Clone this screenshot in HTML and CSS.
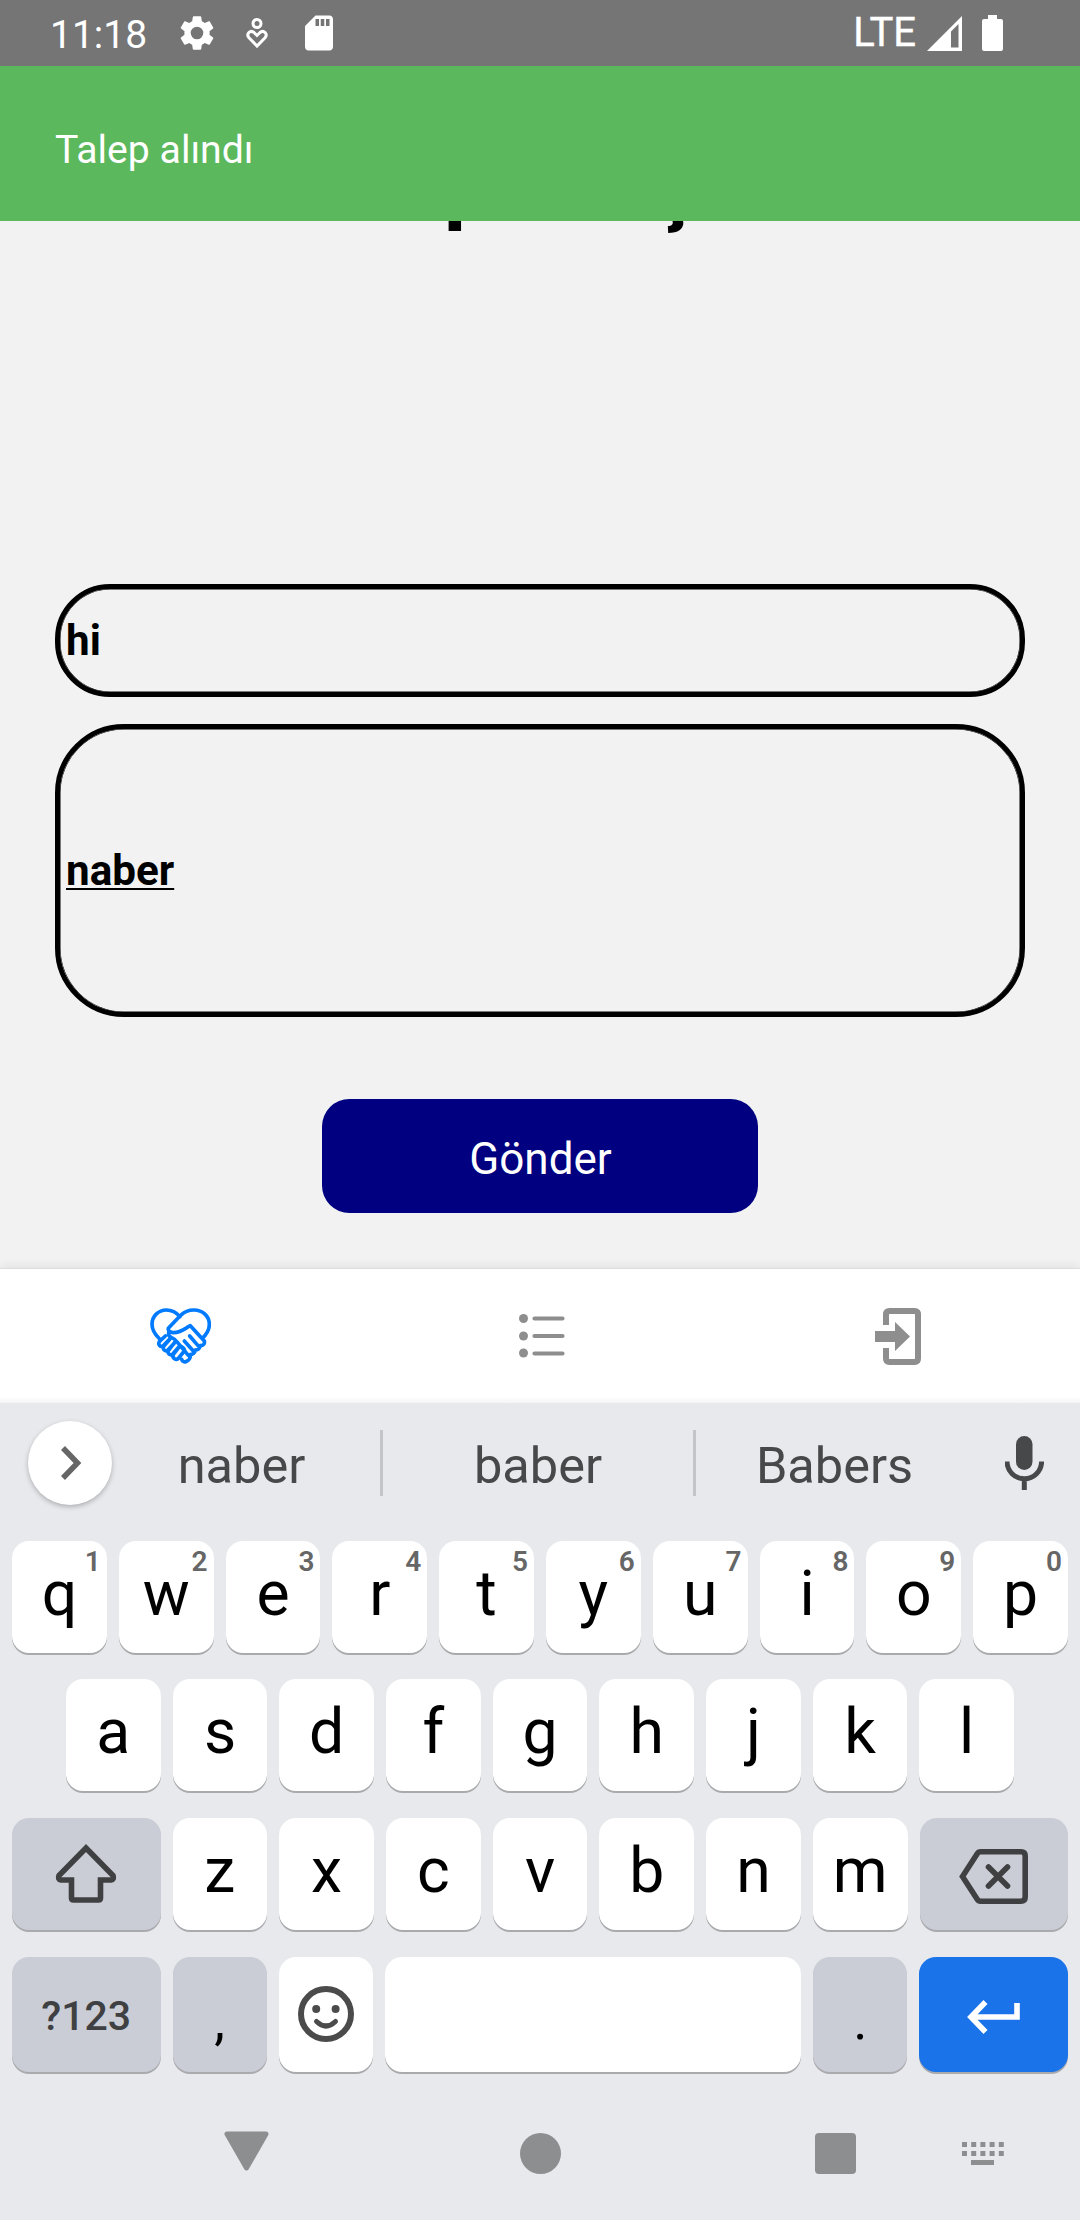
FILE: index.html
```html
<!DOCTYPE html>
<html lang="tr">
<head>
<meta charset="utf-8">
<title>Talep Oluştur</title>
<link rel="stylesheet" href="styles.css">
</head>
<body>
<div class="screen">
  <header class="status">
    <span class="clock">11:18</span>
    <svg class="gear" width="42" height="42" viewBox="0 0 24 24"><path fill="#fff" d="M19.14 12.94c.04-.3.06-.61.06-.94 0-.32-.02-.64-.07-.94l2.03-1.58c.18-.14.23-.41.12-.61l-1.92-3.32c-.12-.22-.37-.29-.59-.22l-2.39.96c-.5-.38-1.03-.7-1.62-.94L14.4 2.81c-.04-.24-.24-.41-.48-.41h-3.84c-.24 0-.43.17-.47.41l-.36 2.54c-.59.24-1.13.57-1.62.94l-2.39-.96c-.22-.08-.47 0-.59.22L2.74 8.87c-.12.21-.08.47.12.61l2.03 1.58c-.05.3-.09.63-.09.94s.02.64.07.94l-2.03 1.58c-.18.14-.23.41-.12.61l1.92 3.32c.12.22.37.29.59.22l2.39-.96c.5.38 1.03.7 1.62.94l.36 2.54c.05.24.24.41.48.41h3.84c.24 0 .44-.17.47-.41l.36-2.54c.59-.24 1.13-.56 1.62-.94l2.39.96c.22.08.47 0 .59-.22l1.92-3.32c.12-.22.07-.47-.12-.61l-2.01-1.58zM12 15.6A3.6 3.6 0 1 1 12 8.400a3.6 3.6 0 0 1 0 7.200z"/></svg>
    <svg class="care" width="22" height="31" viewBox="0 0 22 31" fill="none" stroke="#fff" stroke-width="3"><circle cx="11" cy="5.500" r="4"/><path d="M11 28 3.200 20C-.5 15.800 4.500 11.500 8 14.500l3 3 3-3c3.500-3 8.500 1.300 4.800 5.500z"/></svg>
    <svg class="sd" width="42" height="42" viewBox="0 0 24 24"><path fill="#fff" d="M18 2h-8L4.020 8 4 20c0 1.100.9 2 2 2h12c1.100 0 2-.9 2-2V4c0-1.100-.9-2-2-2zm-6 6h-2V4h2v4zm3 0h-2V4h2v4zm3 0h-2V4h2v4z"/></svg>
    <span class="network">LTE</span>
    <svg class="signal" width="35" height="35" viewBox="0 0 35 35"><path fill="#fff" fill-rule="evenodd" d="M35 0V35H0zM24 15.500V31.500h7.500V8z"/></svg>
    <svg class="battery" width="21" height="36" viewBox="0 0 21 36"><path fill="#fff" d="M6 0h9v4h4q2 0 2 2v28q0 2-2 2H2q-2 0-2-2V6q0-2 2-2h4z"/></svg>
  </header>

  <div class="toast">Talep alındı</div>

  <main class="form">
    <h1 class="title">Talep Oluştur</h1>
    <div class="field subject">hi</div>
    <div class="field message"><u>naber</u></div>
    <button class="send">Gönder</button>
  </main>

  <nav class="tabs">
    <svg class="tab-care" width="61" height="56" viewBox="0 0 183 168" fill="none" stroke="#007aff" stroke-width="11" stroke-linecap="round" stroke-linejoin="round">
      <path d="M29 93C15 80 6 68 6 49 6 25 25 6 49 6c16 0 29 6 41 20"/>
      <path d="M157 91c14-13 21-26 21-42 0-24-20-43-46-43-17 0-29 5-40 16L55 61c-2 7 5 12 15 13 20 1 32-11 51-21l42 46c2 8-3 14-12 14"/>
      <path d="M56 74c-2 8 2 12 9 15 10 4 12 8 18 15l32 38"/>
      <path d="M119 84l25 29M103 99l27 30"/>
      <path d="M150 113c1 8-6 13-15 13 1 9-7 14-15 14 3 9-3 17-12 21-6 2-11-1-13-7"/>
      <path d="M46 84 28 101c-5 9 3 17 11 13l20-21M60 93 41 115c-4 9 4 16 12 12l21-23M74 103 55 128c-3 9 5 15 12 11l20-23M88 116 69 141c-2 10 9 17 16 10l18-22c2-8-8-15-15-13"/>
    </svg>
    <svg class="tab-list" width="46" height="46" viewBox="0 0 46 46" fill="#8e8e8f"><circle cx="4.500" cy="5.500" r="4.500"/><circle cx="4.500" cy="23" r="4.500"/><circle cx="4.500" cy="40" r="4.500"/><path d="M15.500 5.500h28M15.500 23h28M15.500 40.500h28" stroke="#8e8e8f" stroke-width="4.200" stroke-linecap="round"/></svg>
    <svg class="tab-exit" width="46" height="57" viewBox="0 0 46 57"><path d="M11 17V6.500Q11 3 14.500 3h25Q43 3 43 6.500v44Q43 54 39.500 54h-25Q11 54 11 50.500V40" fill="none" stroke="#8e8e8f" stroke-width="6"/><path fill="#8e8e8f" d="M0 23h20v-9l15 14.500L20 43v-9H0z"/></svg>
  </nav>

  <section class="keyboard">
    <div class="suggest">
      <span class="expand"><svg width="21" height="34" viewBox="0 0 21 34"><path d="M2 2l14.500 15L2 32" fill="none" stroke="#666" stroke-width="5.500"/></svg></span>
      <span class="word first">naber</span>
      <span class="word middle">baber</span>
      <span class="word">Babers</span>
      <svg class="mic" width="39" height="54" viewBox="0 0 39 54"><rect x="11" y="0" width="16.500" height="34" rx="8.250" fill="#47484a"/><path d="M2 25.500a17.300 17.300 0 0 0 34.600 0M19.300 43v11" fill="none" stroke="#47484a" stroke-width="5"/></svg>
    </div>
    <div class="keys">
      <div class="row">
        <span class="key">q<sup>1</sup></span><span class="key">w<sup>2</sup></span><span class="key">e<sup>3</sup></span><span class="key">r<sup>4</sup></span><span class="key">t<sup>5</sup></span><span class="key">y<sup>6</sup></span><span class="key">u<sup>7</sup></span><span class="key">i<sup>8</sup></span><span class="key">o<sup>9</sup></span><span class="key">p<sup>0</sup></span>
      </div>
      <div class="row inset">
        <span class="key">a</span><span class="key">s</span><span class="key">d</span><span class="key">f</span><span class="key">g</span><span class="key">h</span><span class="key">j</span><span class="key">k</span><span class="key">l</span>
      </div>
      <div class="row">
        <span class="key wide shade"><svg class="shift" width="62" height="59" viewBox="0 0 62 59"><path d="M31 4 58 31.500q1.500 4-2 4.500H45.500v18q0 2-2 2h-25q-2 0-2-2V36H6q-3.500-.5-2-4.500z" fill="none" stroke="#3f4042" stroke-width="5.600"/></svg></span>
        <span class="key">z</span><span class="key">x</span><span class="key">c</span><span class="key">v</span><span class="key">b</span><span class="key">n</span><span class="key">m</span>
        <span class="key wide shade"><svg class="erase" width="69" height="55" viewBox="0 0 69 55" fill="none" stroke="#3f4042" stroke-width="5.600"><path d="M3.500 27.500 18.200 4.800q1.300-2 3.300-2H62q4.200 0 4.200 4.200v41q0 4.200-4.200 4.200H21.500q-2 0-3.300-2z"/><path d="M29.500 18 48.500 37M48.500 18 29.500 37" stroke-linecap="round"/></svg></span>
      </div>
      <div class="row bottom">
        <span class="key wide shade mode">?123</span>
        <span class="key shade mark">,</span>
        <span class="key"><svg class="smile" width="56" height="56" viewBox="0 0 56 56"><circle cx="28" cy="28" r="25" fill="none" stroke="#4b4b4b" stroke-width="6"/><circle cx="18.200" cy="23" r="4" fill="#4b4b4b"/><circle cx="37.600" cy="23" r="4" fill="#4b4b4b"/><path d="M18.500 35.500q9.500 9 19 0" fill="none" stroke="#4b4b4b" stroke-width="5" stroke-linecap="round"/></svg></span>
        <span class="key space"></span>
        <span class="key shade mark">.</span>
        <span class="key wide enter"><svg width="53" height="34" viewBox="0 0 53 34"><path d="M18.500 2 4 17l14.500 15M4 17h46V3" fill="none" stroke="#fff" stroke-width="5.600"/></svg></span>
      </div>
    </div>
    <div class="system">
      <svg class="back" width="45" height="40" viewBox="0 0 45 40"><path d="M3 3h39L22.500 37z" fill="#8d8e90" stroke="#8d8e90" stroke-width="5" stroke-linejoin="round"/></svg>
      <span class="home"></span>
      <span class="recent"></span>
      <svg class="ime" width="42" height="24" viewBox="0 0 42 24"><path d="M0 2.500h42M0 11.500h42" stroke="#8d8e90" stroke-width="5" stroke-dasharray="5 4.200"/><path d="M9 18h23v5H9z" fill="#8d8e90"/></svg>
    </div>
  </section>
</div>
</body>
</html>
```
FILE: styles.css
```css
* { box-sizing: border-box; }
body { margin: 0; font-family: Roboto, "Liberation Sans", sans-serif; }
svg { display: block; flex: none; }

.screen {
  width: 1080px;
  height: 2220px;
  display: flex;
  flex-direction: column;
  overflow: hidden;
  background: #f2f2f2;
}

.status {
  height: 66px;
  flex: none;
  display: flex;
  align-items: center;
  color: #fff;
  background: #757575;
  font-size: 39px;
  z-index: 1;
}
.clock { width: 126px; margin-left: 50px; padding-top: 3px; }
.care { margin-left: 28px; }
.sd { margin-left: 30px; }
.network { margin-left: auto; padding-bottom: 1px; font-size: 40px; -webkit-text-stroke: 0.4px #fff; }
.signal { margin-left: 11px; }
.battery { margin: 0 77px 0 20px; }

.toast {
  height: 155px;
  flex: none;
  padding: 13px 55px 0;
  display: flex;
  align-items: center;
  color: #fff;
  background: #5cb85c;
  font-size: 39.2px;
  z-index: 1;
}

.form {
  height: 1047px;
  flex: none;
  padding: 0 55px;
  display: flex;
  flex-direction: column;
}
.title {
  margin: -90px 0 349px;
  padding-left: 4px;
  font-size: 88.5px;
  line-height: 104px;
  font-weight: 700;
  text-align: center;
}
.field {
  display: flex;
  align-items: center;
  border: 5px solid #000;
  box-shadow: inset 0 0 0 0.5px #000;
  padding-left: 6px;
  font-size: 42.2px;
  font-weight: 700;
}
.subject { height: 113px; border-radius: 55px; }
.message { height: 293px; margin-top: 27px; border-radius: 69px; }
.message u { text-decoration-thickness: 2px; text-underline-offset: 3px; }
.send {
  width: 436px;
  height: 114px;
  margin: 82px auto 0;
  padding: 5px 0 0 1px;
  border: 0;
  border-radius: 27.5px;
  background: navy;
  color: #fff;
  font: 44px Roboto, "Liberation Sans", sans-serif;
}

.tabs {
  height: 135px;
  flex: none;
  display: flex;
  align-items: center;
  border-top: 1px solid #dedede;
  box-shadow: 0 -2px 9px rgba(0, 0, 0, 0.07);
  background: linear-gradient(#fff 128px, #f4f4f4);
}
.tab-care { margin-left: 150px; }
.tab-list { margin-left: 307.5px; }
.tab-exit { margin-left: 310.5px; }

.keyboard {
  flex: 1;
  display: flex;
  flex-direction: column;
  background: #e8e9ed;
}
.suggest {
  height: 120px;
  padding: 0 36px 0 28px;
  display: flex;
  align-items: center;
  color: #47484a;
  font-size: 50.5px;
}
.expand {
  width: 84px;
  height: 84px;
  padding-left: 2px;
  display: grid;
  place-items: center;
  border-radius: 50%;
  background: #fff;
  box-shadow: 0 2px 5px rgba(0, 0, 0, 0.25);
}
.word {
  width: 277px;
  height: 66px;
  line-height: 72px;
  text-align: center;
}
.first { width: 268px; padding-right: 9px; }
.middle { width: 316px; border: solid #c4c5c9; border-width: 0 3px; }
.mic { margin-left: auto; }

.keys { padding: 18px 12px 0; display: flex; flex-direction: column; gap: 27px; }
.row { display: flex; gap: 12px; }
.inset { margin-top: -1px; padding: 0 54px; }
.key {
  position: relative;
  flex: 1 1 0;
  height: 112px;
  padding-bottom: 8px;
  display: flex;
  align-items: center;
  justify-content: center;
  border-radius: 17px;
  background: #fff;
  box-shadow: 0 2px 0 #a9aaac;
  color: #000;
  font-size: 62.5px;
}
.key sup {
  position: absolute;
  top: 5px;
  right: 6px;
  color: #666;
  font-size: 28px;
  line-height: 32px;
  font-weight: 600;
}
.wide { flex: 0 0 148.5px; }
.shade { background: #cacdd6; }
.bottom .key { height: 115px; }
.bottom .mode { padding: 2px 0 0; color: #3f4042; font-size: 41px; font-weight: 500; }
.bottom .mark { padding-top: 12px; padding-bottom: 0; font-size: 54px; }
.space { flex: 0 0 416px; }
.key.enter { background: #1a73e8; padding: 4px 0 0; }
.smile { margin-top: 6px; }
.shift { margin-top: 6px; }
.erase { margin: 13px 0 0; }

.system {
  margin-top: 58px;
  height: 46px;
  display: flex;
  align-items: center;
}
.back { margin: 0 251px 5px 224px; }
.home { width: 41px; height: 41px; border-radius: 50%; background: #8d8e90; }
.recent { width: 41px; height: 41px; margin-left: 254px; border-radius: 4px; background: #8d8e90; }
.ime { margin: 2px 0 0 106px; }
```
